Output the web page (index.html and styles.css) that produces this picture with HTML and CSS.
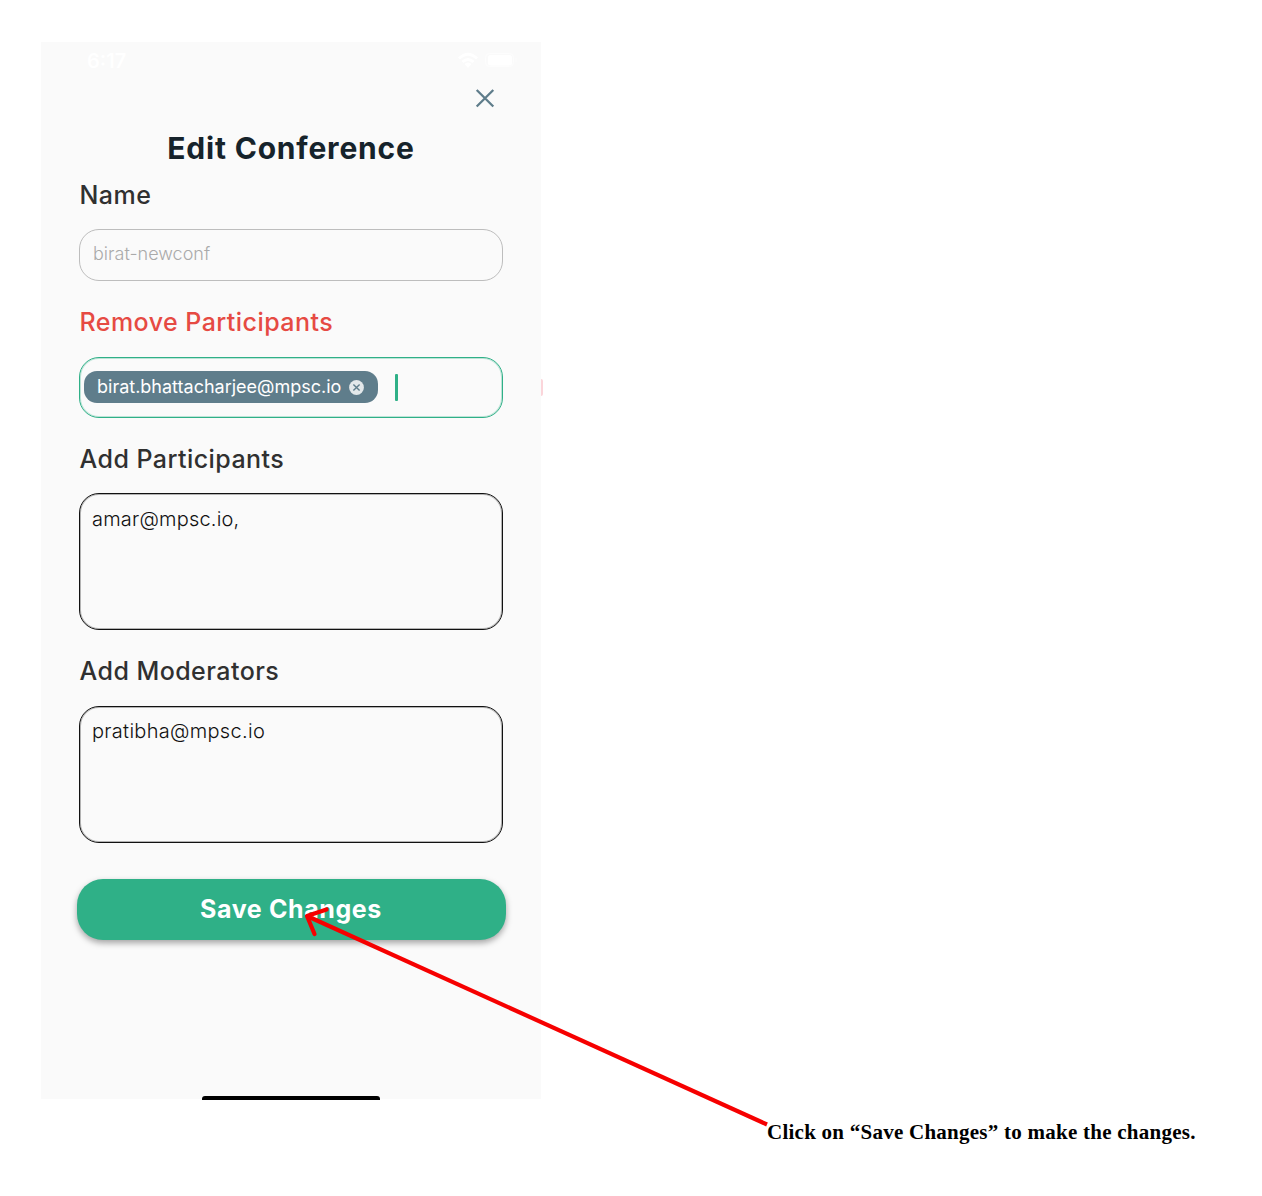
FILE: index.html
```html
<!DOCTYPE html>
<html lang="en">
<head>
<meta charset="utf-8">
<title>Edit Conference</title>
<link rel="stylesheet" href="styles.css">
</head>
<body>
<main class="phone">
  <div class="status">
    <span class="time">6:17</span>
    <svg class="status-icons" width="62" height="18" viewBox="0 0 62 18" fill="none" stroke="#fff">
      <path d="M2 6.500Q11 -2 20 6.500M5.500 10Q11 5 16.500 10" stroke-width="3"/>
      <path d="M7.500 12Q11 9 14.500 12L11 16Z" fill="#fff" stroke="none"/>
      <rect x="28.500" y="1.500" width="28" height="13" rx="4" opacity=".5"/>
      <rect x="31" y="3" width="24" height="10.500" rx="2.500" fill="#fff" stroke="none"/>
      <path d="M59 6v4" opacity=".6"/>
    </svg>
  </div>
  <button class="close" aria-label="Close">
    <svg width="20" height="20" viewBox="0 0 20 20" fill="none" stroke="#5f7d8b" stroke-width="2.300"><path d="M1.700 2L18.300 18.500M18.300 2L1.700 18.500"/></svg>
  </button>
  <h1 class="title">Edit Conference</h1>
  <section class="field">
    <h2 class="label l-name">Name</h2>
    <div class="box name-box">birat-newconf</div>
  </section>
  <section class="field">
    <h2 class="label l-remove">Remove Participants</h2>
    <div class="box chips-box">
      <div class="chip"><span class="email">birat.bhattacharjee@mpsc.io</span>
        <svg width="15" height="15" viewBox="0 0 15 15"><circle cx="7.500" cy="7.500" r="7.400" fill="#e3e8ea"/><path d="M4.400 4.400l6.200 6.200M10.600 4.400l-6.200 6.200" stroke="#5f7d8b" stroke-width="1.400"/></svg>
      </div>
      <i class="caret"></i>
    </div>
  </section>
  <section class="field">
    <h2 class="label l-add">Add Participants</h2>
    <div class="box area amar">amar@mpsc.io,</div>
  </section>
  <section class="field">
    <h2 class="label l-mod">Add Moderators</h2>
    <div class="box area prat">pratibha@mpsc.io</div>
  </section>
  <button class="save">Save Changes</button>
  <div class="home"></div>
  <i class="edge"></i>
</main>
<p class="caption">Click on “Save Changes” to make the changes.</p>
<svg class="arrow" width="480" height="240" viewBox="300 895 480 240" fill="none" stroke="#f60000" stroke-width="4.200">
  <path d="M767 1124.500L307 916"/>
  <path d="M326.500 909.500L307 916L314.500 934" stroke-linecap="round" stroke-linejoin="round"/>
</svg>
</body>
</html>
```

FILE: styles.css
```css
* { box-sizing: border-box; }
body { margin: 0; height: 1196px; background: #fff; position: relative; overflow: hidden; font-family: Inter, sans-serif; display: flow-root; }
.phone { position: relative; width: 500px; height: 1057px; margin: 42px 0 0 41px; padding: 0 38px; background: #fafafa; display: flex; flex-direction: column; }
.status { display: flex; justify-content: space-between; height: 45px; padding: 10px 0 0 8px; margin-right: -16px; }
.time { color: #fff; font-size: 20px; line-height: 18px; font-weight: 600; }
.close { align-self: flex-end; width: 20px; height: 20px; margin: 1px 8px 0 0; padding: 0; border: 0; background: none; display: flex; }
.title { margin: 17px 0 0; height: 46px; line-height: 46px; text-align: center; font-size: 30px; font-weight: 650; letter-spacing: .8px; color: #16232b; }
.field { display: flex; flex-direction: column; }
.label { margin: 0; padding-left: .5px; height: 48px; line-height: 48px; font-size: 25px; font-weight: 450; letter-spacing: .45px; color: #303030; }
.box { width: 424px; border: 1px solid #111; border-radius: 20px; font-weight: 300; color: #111; }
.name-box { height: 52px; margin-top: 10px; padding-left: 13px; line-height: 48px; border-color: #bdbdbd; color: #aaa; font-size: 18px; }
.l-remove { margin-top: 17px; color: #e64a43; }
.chips-box { height: 61px; margin-top: 11px; padding: 0 0 1px 4px; border-color: #2fb087; box-shadow: inset 0 0 0 1px rgba(47,176,135,.3); display: flex; align-items: center; }
.chip { width: 294px; height: 32px; padding-left: 13px; border-radius: 13px; background: #5f7d8b; color: #fff; font-size: 18px; font-weight: 400; display: flex; align-items: center; gap: 8px; white-space: nowrap; }
.email { padding-bottom: 2px; }
.caret { width: 2.500px; height: 27px; margin-left: 17px; border-radius: 1px; background: #2fb087; }
.l-add { margin-top: 17px; }
.area { height: 137px; margin-top: 10px; padding: 13px 12px; font-size: 20px; line-height: 24px; box-shadow: inset 0 0 0 1px rgba(17,17,17,.3); }
.amar { letter-spacing: .2px; }
.prat { margin-top: 11px; padding-top: 12px; letter-spacing: .3px; }
.l-mod { margin-top: 17px; }
.save { width: 429px; height: 61px; margin: 36px 0 0 -2.500px; padding: 0; border: 0; border-radius: 26px; background: #2fb087; color: #fff; font: 700 25px/61px Inter, sans-serif; letter-spacing: .6px; box-shadow: 0 3px 6px rgba(0,0,0,.35); }
.home { width: 178px; height: 4px; margin: auto 0 -1px 123px; background: #000; border-radius: 3px 3px 0 0; }
.edge { position: absolute; right: -2px; top: 337px; width: 2px; height: 17px; background: #fbd5da; border-radius: 0 2px 2px 0; }
.arrow { position: absolute; left: 300px; top: 895px; }
.caption { margin: 20px 0 0 767px; font: 700 21px/26px "Liberation Serif", serif; letter-spacing: .25px; color: #000; white-space: nowrap; }
```
